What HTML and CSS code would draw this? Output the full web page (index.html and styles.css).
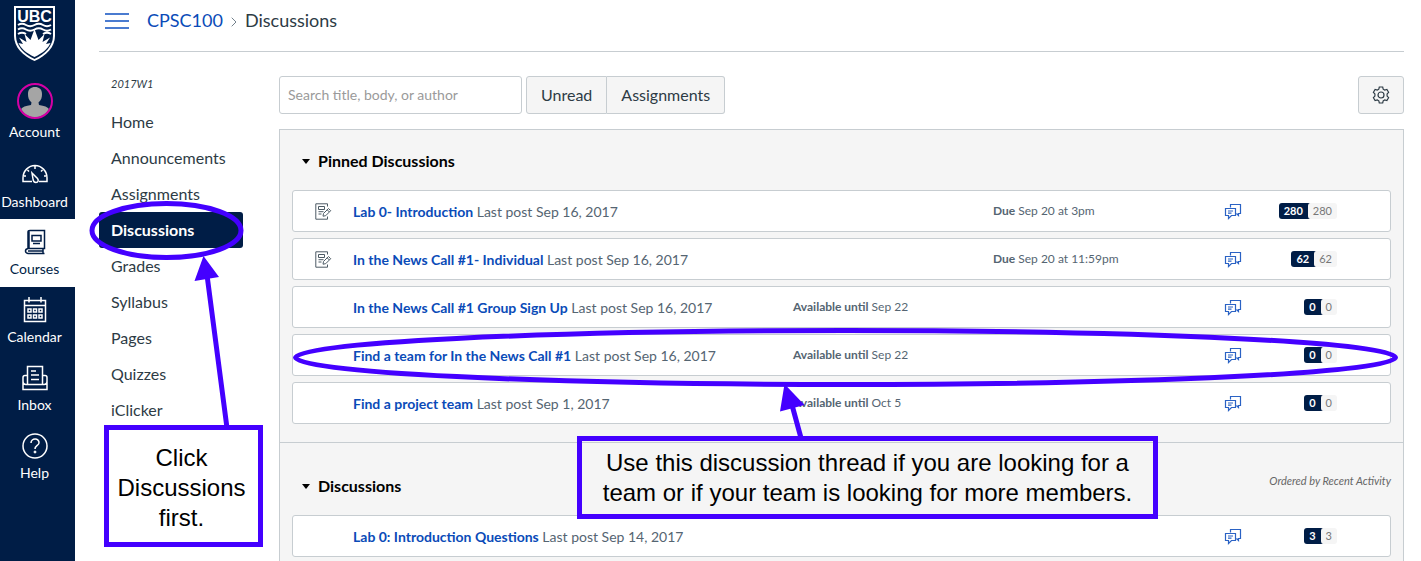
FILE: index.html
```html
<!DOCTYPE html>
<html lang="en">
<head>
<meta charset="utf-8">
<title>CPSC100 Discussions</title>
<link rel="stylesheet" href="styles.css">
</head>
<body>
<svg class="symbols" aria-hidden="true">
  <symbol id="chat" viewBox="0 0 18 17">
    <path d="M6.500 4.500V1.500H16.500V10.500H14.500V12.500L12.500 10.500M1.500 5.500H11.500V12.500H7.500L4.500 15.500V12.500H1.500ZM4 8H9M4 10.200H7.500"/>
  </symbol>
  <symbol id="assignment" viewBox="0 0 17 17">
    <path d="M12.500 3.500V.800H.800V16.200H12.500V13.500M3.500 3.500H9.500V6.500H3.500ZM3.500 8.700H8.500M3.500 11H6.500M8.500 10.500L13.500 5.500L15.700 7.700L10.700 12.700L8 13.200ZM12.200 6.800L14.400 9"/>
  </symbol>
</svg>
<div class="page">
  <nav class="global-nav" aria-label="Global navigation">
    <a class="logo" href="#" aria-label="UBC home">
      <svg width="42" height="58" viewBox="0 0 42 58">
        <path class="shield" d="M0 1H41V31C41 42 32 51 20.500 56C9 51 0 42 0 31Z"/>
        <path class="shield-inner" d="M2 3H39V31C39 41 31 49 20.500 54C10 49 2 41 2 31Z"/>
        <text class="logo-text" x="20.500" y="17" text-anchor="middle">UBC</text>
        <path class="waves" d="M4 20Q8 17.500 12 20T20.500 20T29 20T37 20M4 24.500Q8 22 12 24.500T20.500 24.500T29 24.500T37 24.500M4 29Q8 26.500 12 29M37 29Q33 26.500 29 29"/>
        <path class="sun" d="M20.500 52C12 48 6.500 43 4.500 38L9 39L5 32.500L12.500 37L10.500 29L16.500 35L20.500 24L24.500 35L30.500 29L28.500 37L36 32.500L32 39L36.500 38C34.500 43 29 48 20.500 52Z"/>
      </svg>
    </a>
    <a class="nav-item account" href="#">
      <svg width="36" height="36" viewBox="0 0 36 36">
        <circle cx="18" cy="18" r="17" fill="#001d46"/>
        <path d="M4 26Q6 23 14 22L14.500 19.500C11.500 17 11 14 11 11C11 6 14 4 18 4S25 6 25 11C25 14 24.500 17 21.500 19.500L22 22Q30 23 32 26A16 16 0 0 1 4 26Z" fill="#a5a5a5"/>
        <circle cx="18" cy="18" r="17" fill="none" stroke="#d500a5" stroke-width="2"/>
      </svg>
      <span>Account</span>
    </a>
    <a class="nav-item" href="#">
      <svg class="icon" width="26" height="26" viewBox="0 0 26 26">
        <path d="M10 19.500H1V16C1 9 6.500 3.500 13 3.500S25 9 25 16V19.500H17M13 4V7M5.500 8L7 9.500M20.500 8L19 9.500M2 14H4M24 14H22M10 11L15.500 16.500C17 18.500 16 20.500 14 20.500S11.200 19 11 17Z"/>
      </svg>
      <span>Dashboard</span>
    </a>
    <a class="nav-item current" href="#" aria-current="page">
      <svg class="icon" width="26" height="26" viewBox="0 0 26 26">
        <path d="M6 19.500V3Q6 1.500 8 1.500H22.500V19.500H6Q3.500 20 3.500 22T6 24.500H22.500M21 19.500V24.500M6 22H21M7 2V19M10 6.500H19V12H10ZM11 14.500H18"/>
      </svg>
      <span>Courses</span>
    </a>
    <a class="nav-item" href="#">
      <svg class="icon" width="26" height="26" viewBox="0 0 26 26">
        <path d="M2.500 3.500H23.500V24.500H2.500ZM2.500 8.500H23.500M7 0V5.500M19 0V5.500M6 12H9V15H6ZM11.500 12H14.500V15H11.500ZM17 12H20V15H17ZM6 18H9V21H6ZM11.500 18H14.500V21H11.500ZM17 18H20V21H17Z"/>
      </svg>
      <span>Calendar</span>
    </a>
    <a class="nav-item" href="#">
      <svg class="icon" width="26" height="26" viewBox="0 0 26 26">
        <path d="M5.500 19V1.500H20.500V19M5.500 10.500H3Q1 10.500 1 12.500V24.500H25V12.500Q25 10.500 23 10.500H20.500M1 16Q1 19.500 4 19.500H22Q25 19.500 25 16M9 6H14M9 10H17M9 14.500H17"/>
      </svg>
      <span>Inbox</span>
    </a>
    <a class="nav-item" href="#">
      <svg class="icon" width="26" height="26" viewBox="0 0 26 26">
        <circle cx="13" cy="13" r="12"/>
        <path d="M9 10C9 4.500 17.500 5 17 10C16.600 12.500 13 12.500 13 16"/>
        <circle class="dot" cx="13" cy="19" r="1"/>
      </svg>
      <span>Help</span>
    </a>
  </nav>

  <div class="main">
    <header class="crumb-bar">
      <button class="menu-toggle" type="button" aria-label="Toggle course navigation"><span></span><span></span><span></span></button>
      <nav class="crumbs" aria-label="Breadcrumb">
        <a href="#">CPSC100</a>
        <svg width="6" height="10" viewBox="0 0 6 10"><path d="M.700 .700L5 5L.700 9.300"/></svg>
        <span>Discussions</span>
      </nav>
    </header>

    <div class="columns">
      <nav class="course-nav" aria-label="Course navigation">
        <div class="term">2017W1</div>
        <a href="#">Home</a>
        <a href="#">Announcements</a>
        <a href="#">Assignments</a>
        <a class="active" href="#" aria-current="page">Discussions</a>
        <a href="#">Grades</a>
        <a href="#">Syllabus</a>
        <a href="#">Pages</a>
        <a href="#">Quizzes</a>
        <a href="#">iClicker</a>
      </nav>

      <main class="content">
        <div class="toolbar">
          <input class="search" type="text" placeholder="Search title, body, or author" aria-label="Search title, body, or author">
          <div class="filters">
            <button class="btn" type="button">Unread</button>
            <button class="btn" type="button">Assignments</button>
          </div>
          <button class="btn settings" type="button" aria-label="Discussion settings">
            <svg width="18" height="18" viewBox="0 0 18 18">
              <path d="M7.300 1H10.700L11.200 3.200L12.700 4L14.900 3.400L16.600 6.300L15.100 7.900V10.100L16.600 11.700L14.900 14.600L12.700 14L11.200 14.800L10.700 17H7.300L6.800 14.800L5.300 14L3.100 14.600L1.400 11.700L2.900 10.100V7.900L1.400 6.300L3.100 3.400L5.300 4L6.800 3.200Z"/>
              <circle cx="9" cy="9" r="3"/>
            </svg>
          </button>
        </div>

        <div class="panel">
          <section class="group">
            <div class="group-head">
              <h2><button type="button"><span class="caret"></span>Pinned Discussions</button></h2>
            </div>
            <ul class="rows">
              <li class="row">
                <svg class="type" width="17" height="17"><use href="#assignment"/></svg>
                <div class="title"><a href="#">Lab 0- Introduction</a> Last post Sep 16, 2017</div>
                <div class="date due"><b>Due</b> Sep 20 at 3pm</div>
                <svg class="chat" width="18" height="17"><use href="#chat"/></svg>
                <div class="counts"><b>280</b><span>280</span></div>
              </li>
              <li class="row">
                <svg class="type" width="17" height="17"><use href="#assignment"/></svg>
                <div class="title"><a href="#">In the News Call #1- Individual</a> Last post Sep 16, 2017</div>
                <div class="date due"><b>Due</b> Sep 20 at 11:59pm</div>
                <svg class="chat" width="18" height="17"><use href="#chat"/></svg>
                <div class="counts"><b>62</b><span>62</span></div>
              </li>
              <li class="row">
                <div class="title"><a href="#">In the News Call #1 Group Sign Up</a> Last post Sep 16, 2017</div>
                <div class="date until"><b>Available until</b> Sep 22</div>
                <svg class="chat" width="18" height="17"><use href="#chat"/></svg>
                <div class="counts"><b>0</b><span>0</span></div>
              </li>
              <li class="row">
                <div class="title"><a href="#">Find a team for In the News Call #1</a> Last post Sep 16, 2017</div>
                <div class="date until"><b>Available until</b> Sep 22</div>
                <svg class="chat" width="18" height="17"><use href="#chat"/></svg>
                <div class="counts"><b>0</b><span>0</span></div>
              </li>
              <li class="row">
                <div class="title"><a href="#">Find a project team</a> Last post Sep 1, 2017</div>
                <div class="date until"><b>Available until</b> Oct 5</div>
                <svg class="chat" width="18" height="17"><use href="#chat"/></svg>
                <div class="counts"><b>0</b><span>0</span></div>
              </li>
            </ul>
          </section>
          <section class="group">
            <div class="group-head">
              <h2><button type="button"><span class="caret"></span>Discussions</button></h2>
              <em>Ordered by Recent Activity</em>
            </div>
            <ul class="rows">
              <li class="row">
                <div class="title"><a href="#">Lab 0: Introduction Questions</a> Last post Sep 14, 2017</div>
                <svg class="chat" width="18" height="17"><use href="#chat"/></svg>
                <div class="counts"><b>3</b><span>3</span></div>
              </li>
            </ul>
          </section>
        </div>
      </main>
    </div>
  </div>

  <svg class="marks" width="1421" height="561" viewBox="0 0 1421 561" aria-hidden="true">
    <ellipse cx="166.500" cy="230.500" rx="74.500" ry="27"/>
    <ellipse cx="845.500" cy="357.500" rx="550" ry="27"/>
    <path d="M207 275L227 428M792 405L801 438"/>
    <path class="head" d="M203.500 256L219 277L194.500 281ZM784.500 384L804.500 405L780 411.500Z"/>
  </svg>
  <div class="callout callout-nav">Click<br>Discussions<br>first.</div>
  <div class="callout callout-thread">Use this discussion thread if you are looking for a<br>team or if your team is looking for more members.</div>
</div>
</body>
</html>
```
FILE: styles.css
```css
* { box-sizing: border-box; }

body {
  margin: 0;
  background: #fff;
  color: #2d3b45;
  font-family: Lato, "Liberation Sans", sans-serif;
  font-size: 16px;
  line-height: 24px;
}

a { color: #0a4bb8; text-decoration: none; }
button, input { font: inherit; color: inherit; }
button { cursor: pointer; }
.symbols { display: none; }

.page {
  position: relative;
  display: flex;
  min-height: 100vh;
  overflow: hidden;
}

/* Global navigation */
.global-nav {
  flex: none;
  width: 75px;
  background: #001d46;
}
.logo {
  display: flex;
  justify-content: center;
  height: 75px;
  padding: 5px 6px 0 0;
}
.shield { fill: #fff; }
.shield-inner { fill: #001d46; }
.logo-text {
  fill: #fff;
  font-family: "Liberation Sans", Arial, sans-serif;
  font-size: 16px;
  font-weight: 700;
}
.waves { fill: none; stroke: #fff; stroke-width: 2; }
.sun { fill: #fff; }
.nav-item {
  display: flex;
  flex-direction: column;
  align-items: center;
  gap: 4px;
  height: 67px;
  padding: 10px 6px 0 0;
  color: #fff;
  font-size: 14px;
  line-height: 20px;
}
.nav-item.account { height: 77px; padding-top: 8px; gap: 3px; }
.nav-item.current { height: 68px; background: #fff; color: #001d46; }
.nav-item.current ~ .nav-item { height: 68px; }
.icon { fill: none; stroke: currentColor; stroke-width: 1.5; }
.icon .dot { fill: currentColor; stroke-width: 1; }

/* Breadcrumbs */
.main {
  flex: 1;
  display: flex;
  flex-direction: column;
  min-width: 0;
  padding: 0 17px 0 24px;
}
.crumb-bar {
  display: flex;
  align-items: center;
  gap: 18px;
  height: 52px;
  padding: 0 6px 10px;
  border-bottom: 1px solid #c7cdd1;
}
.menu-toggle {
  display: flex;
  flex-direction: column;
  gap: 5px;
  width: 24px;
  padding: 0;
  border: 0;
  background: none;
}
.menu-toggle span { height: 2px; background: #4a7bd0; }
.crumbs {
  display: flex;
  align-items: center;
  gap: 8px;
  padding-bottom: 1px;
  font-size: 18px;
}
.crumbs svg { fill: none; stroke: #73818c; margin-top: 3px; }

.columns { flex: 1; display: flex; gap: 36px; padding-top: 24px; }

/* Course navigation */
.course-nav { flex: none; width: 144px; }
.course-nav a {
  display: block;
  padding: 6px 12px;
  border-radius: 3px;
  color: #2d3b45;
}
.course-nav .active { background: #001d46; color: #fff; font-weight: 700; }
.term {
  height: 28px;
  padding-left: 12px;
  font-size: 11px;
  font-style: italic;
  line-height: 16px;
}

/* Toolbar */
.content {
  flex: 1;
  display: flex;
  flex-direction: column;
  gap: 15px;
  min-width: 0;
}
.toolbar { display: flex; gap: 4px; height: 38px; }
.search {
  width: 243px;
  padding: 0 8px;
  border: 1px solid #c7cdd1;
  border-radius: 3px;
  background: #fff;
  font-size: 14px;
}
.search::placeholder { color: #9a9a9a; opacity: 1; }
.filters { display: flex; }
.btn {
  padding: 0 14px;
  border: 1px solid #c7cdd1;
  border-radius: 3px;
  background: #f5f5f5;
}
.filters .btn:first-child { border-radius: 3px 0 0 3px; }
.filters .btn:last-child { border-left: 0; border-radius: 0 3px 3px 0; }
.settings {
  display: flex;
  align-items: center;
  justify-content: center;
  width: 46px;
  margin-left: auto;
}
.settings svg { flex: none; fill: none; stroke: #2d3b45; stroke-width: 1.2; }

/* Discussion lists */
.panel {
  flex: 1;
  border: 1px solid #c7cdd1;
  border-bottom: 0;
  background: #f5f5f5;
}
.group { padding: 0 12px; }
.group + .group { margin-top: 18px; padding-top: 12px; border-top: 1px solid #c7cdd1; }
.group-head {
  display: flex;
  align-items: center;
  justify-content: space-between;
  height: 60px;
}
.group-head em { color: #666; font-size: 11px; line-height: 16px; padding-bottom: 8px; }
.group-head h2 { margin: 0; font-size: 16px; }
.group-head button {
  display: flex;
  align-items: center;
  gap: 8px;
  padding: 2px 0 0 10px;
  border: 0;
  background: none;
  color: #000;
}
.caret {
  border: 4px solid transparent;
  border-top: 5px solid #000;
  border-bottom: 0;
}
.rows {
  display: grid;
  gap: 6px;
  margin: 0;
  padding: 0;
  list-style: none;
}
.row {
  display: grid;
  grid-template-columns: 60px minmax(0, 1fr) 200px 231px 18px 95px;
  align-items: center;
  height: 42px;
  padding-right: 53px;
  border: 1px solid #c7cdd1;
  border-radius: 3px;
  background: #fff;
}
.row > * { grid-row: 1; }
.type { grid-column: 1; justify-self: center; fill: none; stroke: #4d5b65; }
.title { grid-column: 2; padding-top: 2px; color: #556572; font-size: 14px; white-space: nowrap; }
.title a { font-weight: 700; }
.date { color: #556572; font-size: 12px; }
.until { grid-column: 3; }
.due { grid-column: 4; }
.chat { grid-column: 5; fill: none; stroke: #2a62c4; stroke-width: 1.2; }
.counts {
  display: flex;
  grid-column: 6;
  justify-self: end;
  font-size: 11px;
  line-height: 16px;
}
.counts b {
  margin-right: -3px;
  padding: 0 8px 0 5px;
  border-radius: 3px;
  background: #001d46;
  color: #fff;
}
.counts span {
  padding: 0 5px;
  border-radius: 3px;
  background: #f5f5f5;
  color: #777;
}

/* Instructor annotations drawn over the page */
.marks {
  position: absolute;
  top: 0;
  left: 0;
  fill: none;
  stroke: #4400ff;
  stroke-width: 5;
  pointer-events: none;
}
.marks .head { fill: #4400ff; stroke: none; }
.callout {
  position: absolute;
  border: 5px solid #4400ff;
  color: #000;
  font-family: "Liberation Sans", Arial, sans-serif;
  font-size: 24px;
  line-height: 30px;
  text-align: center;
  white-space: nowrap;
}
.callout-nav { top: 425px; left: 104px; width: 159px; padding: 13px 4px 9px 0; background: #fff; }
.callout-thread { top: 436px; left: 577px; width: 581px; padding: 7px 0 6px; }
```
